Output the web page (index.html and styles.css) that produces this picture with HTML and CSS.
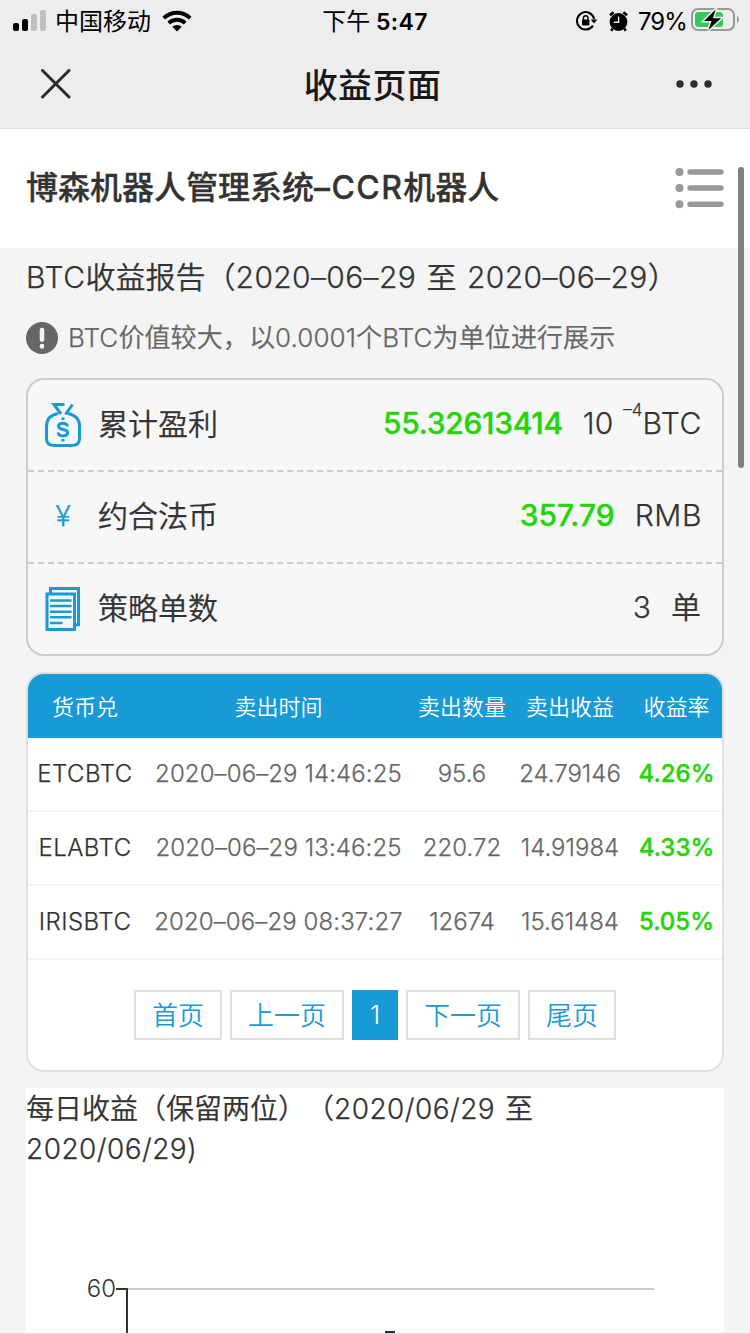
FILE: index.html
```html
<!DOCTYPE html>
<html lang="zh-CN">
<head>
<meta charset="utf-8">
<title>收益页面</title>
<link rel="stylesheet" href="styles.css">
</head>
<body>
<div class="screen">
  <header class="chrome">
    <div class="status">
      <div class="status-left">
        <svg class="signal" width="34" height="22" viewBox="0 0 34 22"><rect x="0" y="13" width="6" height="8" rx="2"/><rect x="9" y="9" width="6" height="12" rx="2"/><rect class="dim" x="18" y="4" width="6" height="17" rx="2"/><rect class="dim" x="27" y="0" width="6" height="21" rx="2"/></svg>
        <span class="carrier">中国移动</span>
        <svg class="wifi" width="30" height="22" viewBox="0 0 30 22"><path class="arc" d="M1.8 8.1a19.2 19.2 0 0 1 26.4 0"/><path class="arc" d="M6.8 13.1a12 12 0 0 1 16.4 0"/><path d="M10.3 16.8a7 7 0 0 1 9.4 0L15 21.6z"/></svg>
      </div>
      <div class="clock">下午 <b>5:47</b></div>
      <div class="status-right">
        <svg width="22" height="20" viewBox="0 0 22 20"><path class="thin" d="M17 14.6A8.7 8.7 0 1 1 18.2 8"/><path d="M14.7 8.4h6.6L18 12.5z"/><rect x="6" y="8.4" width="7.4" height="6" rx=".8"/><path class="hair" d="M7.4 9V7a2.3 2.3 0 0 1 4.6 0v2"/></svg>
        <svg class="alarm" width="19" height="21" viewBox="0 0 19 21"><circle cx="9.500" cy="11" r="8.900"/><path class="thick" d="M1 4.300 4.600 1.200M18 4.300 14.400 1.200M3.600 17.800 2.200 19.800M15.400 17.800l1.400 2"/><path class="hands" d="M9.600 5.500v5.700H4.800"/></svg>
        <span class="percent">79%</span>
        <svg class="battery" width="48" height="24" viewBox="0 0 48 24"><rect class="shell" x="1" y="1" width="42" height="21" rx="6"/><path class="nub" d="M46 8c2.5 1 2.5 6 0 7z"/><rect class="charge" x="4" y="4" width="28" height="15" rx="3.5"/><path class="bolt" d="M24.500 1.500 13 13h7.500L17.500 22 30 10.200H22z"/></svg>
      </div>
    </div>
    <div class="nav">
      <svg class="close" width="30" height="30" viewBox="0 0 30 30"><path d="M1.5 1.5 28 28M28 1.5 1.5 28"/></svg>
      <h1>收益页面</h1>
      <svg class="more" width="36" height="8" viewBox="0 0 36 8"><circle cx="4" cy="4" r="3.7"/><circle cx="18" cy="4" r="3.7"/><circle cx="32" cy="4" r="3.7"/></svg>
    </div>
  </header>

  <section class="brand">
    <h2>博森机器人管理系统<span>–CCR</span>机器人</h2>
    <svg width="49" height="41" viewBox="0 0 49 41"><circle cx="4.500" cy="4" r="4"/><circle cx="4.500" cy="20" r="4"/><circle cx="4.500" cy="36.300" r="4"/><path d="M15 4h31M15 20h31M15 36.300h31"/></svg>
  </section>

  <main>
    <h3 class="report"><span class="latin">BTC</span>收益报告（<span class="range">2020–06–29 至 2020–06–29</span>）</h3>
    <p class="tip">
      <svg width="32" height="32" viewBox="0 0 32 32"><circle cx="16" cy="16" r="16"/><path d="M16 8v9.6M16 24v.4"/></svg>
      <span>BTC价值较大，以0.0001个BTC为单位进行展示</span>
    </p>

    <ul class="summary">
      <li>
        <svg class="icon" width="40" height="46" viewBox="0 0 40 46"><path d="M15 11.5C8 13 3.5 17 3.5 24v12.500q0 7 8 7h17q8 0 8-7V24C36.500 17 32 13 25 11.500"/><path d="M21.500 2.500H11L18 12M29.500 2.500 22.500 12.500"/><path d="M20 15.500v2.500M20 37v2.500"/><path d="M24.500 24.500c0-2-2-3.300-4.500-3.300s-4.500 1-4.500 3c0 4.400 9.200 2.100 9.200 6.400 0 2.100-2 3.300-4.700 3.300s-4.700-1.300-4.800-3.400"/></svg>
        <span class="label">累计盈利</span>
        <span class="value"><b class="profit">55.32613414</b><span class="unit">10</span><sup>–4</sup><span class="latin">BTC</span></span>
      </li>
      <li>
        <span class="icon yen">¥</span>
        <span class="label">约合法币</span>
        <span class="value"><b>357.79</b><span class="unit latin">RMB</span></span>
      </li>
      <li>
        <svg class="icon docs" width="40" height="46" viewBox="0 0 40 46"><path d="M7.500 7V2.500h28v36.200H32M4 8h27.500v35.500H4z"/><path class="lines" d="M8 14.500h19.500M8 20h19.500M8 25.700h19.500M8 31.200h19.500M8 37h10.500"/></svg>
        <span class="label">策略单数</span>
        <span class="value"><span>3</span><span class="unit cjk">单</span></span>
      </li>
    </ul>

    <section class="orders">
      <div class="row head"><span>货币兑</span><span>卖出时间</span><span>卖出数量</span><span>卖出收益</span><span>收益率</span></div>
      <div class="row"><span class="pair">ETCBTC</span><span class="time">2020–06–29 14:46:25</span><span>95.6</span><span>24.79146</span><b>4.26%</b></div>
      <div class="row"><span class="pair">ELABTC</span><span class="time">2020–06–29 13:46:25</span><span>220.72</span><span>14.91984</span><b>4.33%</b></div>
      <div class="row"><span class="pair">IRISBTC</span><span class="time">2020–06–29 08:37:27</span><span>12674</span><span>15.61484</span><b>5.05%</b></div>
      <nav class="pager"><a>首页</a><a class="wide">上一页</a><a class="current">1</a><a class="wide">下一页</a><a>尾页</a></nav>
    </section>

    <section class="daily">
      <h3>每日收益（保留两位）（<span class="days">2020/06/29 至</span><br><span class="days">2020/06/29)</span></h3>
      <svg class="chart" width="698" height="166" viewBox="0 0 698 166"><path class="grid" d="M102 121h526"/><path class="axis" d="M90 121h11M101 120v46"/><rect x="359" y="163" width="10" height="3"/><text x="90" y="129" text-anchor="end">60</text></svg>
    </section>
  </main>
  <div class="scrollbar"></div>
</div>
</body>
</html>
```
FILE: styles.css
```css
* { box-sizing: border-box; margin: 0; padding: 0; }
body {
  width: 750px;
  height: 1334px;
  overflow: hidden;
  background: #f4f4f4;
  color: #333;
  font-family: Inter, "Noto Sans CJK SC DemiLight", "Noto Sans CJK SC", sans-serif;
  font-weight: 300;
  text-spacing-trim: space-all;
}
.screen { position: relative; height: 1334px; overflow: hidden; }
.screen::after {
  content: "";
  position: absolute;
  inset: auto 0 0;
  height: 1px;
  background: #dcdcdc;
}
svg { display: block; flex: none; }

/* Status bar and title bar */
.chrome { height: 129px; background: #ededed; border-bottom: 1px solid #e0e0e0; font-family: Inter, "Noto Sans CJK SC", sans-serif; }
.status {
  display: grid;
  grid-template-columns: 1fr auto 1fr;
  height: 40px;
  align-items: center;
  padding: 0 11px 0 13px;
  color: #000;
  font-size: 24px;
  font-weight: 400;
  line-height: 40px;
}
.status-left, .status-right { display: flex; align-items: center; }
.signal .dim { fill: #bfbfbf; }
.carrier { margin-left: 8px; padding-top: 2px; }
.wifi { margin-left: 11px; }
.wifi .arc { fill: none; stroke: #000; stroke-width: 4; }
.clock { padding-top: 2px; margin-right: 2px; }
.clock b { font-size: 23px; font-weight: 600; letter-spacing: .4px; margin-left: -1px; }
.status-right { justify-content: flex-end; }
.status-right .thin { fill: none; stroke: #000; stroke-width: 2; }
.status-right .hair { fill: none; stroke: #000; stroke-width: 1.4; }
.alarm { margin-left: 11px; }
.alarm .thick { stroke: #000; stroke-width: 2.6; }
.status-right .alarm .hands { fill: none; stroke: #ededed; stroke-width: 1.4; }
.percent { margin-left: 10px; padding-top: 1px; letter-spacing: -.9px; }
.battery { margin: -2px 0 0 4px; }
.battery .shell { fill: none; stroke: #999; stroke-width: 2; }
.battery .nub { fill: #999; }
.battery .charge { fill: #35c759; }
.battery .bolt { stroke: #ededed; stroke-width: 3; paint-order: stroke; }
.nav {
  display: grid;
  grid-template-columns: 1fr auto 1fr;
  align-items: center;
  height: 88px;
  padding: 0 38px 0 41px;
}
.nav h1 { margin: 3px 8px 0 0; color: #191919; font-size: 34px; font-weight: 500; line-height: 50px; letter-spacing: .4px; }
.close { stroke: #2c2c2c; stroke-width: 3; stroke-linecap: round; }
.more { justify-self: end; fill: #2c2c2c; }

/* Brand strip */
.brand {
  display: flex;
  align-items: center;
  justify-content: space-between;
  height: 119px;
  padding: 0 26px;
  background: #fff;
}
.brand h2 { margin-top: -2px; font-family: Inter, "Noto Sans CJK SC", sans-serif; font-size: 32px; font-weight: 500; line-height: 46px; -webkit-text-stroke: .3px #333; }
.brand h2 span { letter-spacing: 1.4px; }
.brand svg { margin-top: -1px; fill: #999; stroke: none; }
.brand path { stroke: #999; stroke-width: 5.4; stroke-linecap: round; }

/* Report */
main { padding: 0 26px; -webkit-text-stroke: .25px currentcolor; }
.latin { letter-spacing: .6px; }
.report { height: 60px; font-size: 30px; font-weight: 300; line-height: 58px; white-space: nowrap; }
.range { letter-spacing: .36px; word-spacing: 1.500px; }
.tip { display: flex; align-items: center; gap: 10px; height: 60px; color: #666; font-size: 26px; line-height: 38px; letter-spacing: .1px; white-space: nowrap; }
.tip span { margin-top: -1px; }
.tip svg { fill: #666; }
.tip path { stroke: #f4f4f4; stroke-width: 4.6; stroke-linecap: round; }

/* Totals */
.summary {
  margin-top: 10px;
  height: 278px;
  border: 2px solid #ccc;
  border-radius: 18px;
  background: #f7f7f7;
  list-style: none;
  font-size: 30px;
}
.summary li { display: flex; align-items: center; height: 92px; padding: 0 20px 0 15px; border-bottom: 2px dashed #ccc; }
.summary li:last-child { height: 90px; border: 0; }
.icon { width: 40px; fill: none; stroke: #189ad6; stroke-width: 3; }
.docs .lines { stroke-width: 2.5; stroke-linecap: round; }
.yen { padding-bottom: 4px; color: #189ad6; text-align: center; font-size: 29px; }
.label { flex: 1; margin-left: 15px; padding-bottom: 7px; }
.value { display: flex; align-items: center; padding-bottom: 4px; white-space: nowrap; }
.value b, .row b { color: #26d40c; font-weight: 500; -webkit-text-stroke: .4px #26d40c; }
.profit { letter-spacing: -.3px; }
.unit { margin-left: 20px; }
.unit.cjk { margin: -4px 1px 0 20px; }
.value sup { align-self: flex-start; margin: -10px 0 0 10px; font-size: 17px; font-weight: 300; line-height: 30px; }

/* Orders table */
.orders {
  height: 400px;
  margin-top: 16px;
  border: 2px solid #dfdfdf;
  border-radius: 18px;
  background: #fff;
  overflow: hidden;
}
.row {
  display: grid;
  grid-template-columns: 114px 273px 94px 122px 91px;
  align-items: center;
  height: 74px;
  padding-bottom: 1px;
  border-bottom: 2px solid #f4f4f4;
  color: #666;
  font-size: 24px;
  text-align: center;
  white-space: nowrap;
}
.row .pair { color: #333; letter-spacing: .5px; }
.row .time { letter-spacing: .1px; }
.head { height: 64px; padding-bottom: 3px; border: 0; background: #189ad6; color: #fff; font-size: 22px; -webkit-text-stroke: 0; }
.pager { display: flex; justify-content: center; gap: 8px; margin-top: 30px; -webkit-text-stroke: 0; }
.pager a {
  width: 88px;
  height: 50px;
  border: 2px solid #dfdfdf;
  color: #189ad6;
  font-size: 26px;
  line-height: 48px;
  text-align: center;
}
.pager .wide { width: 114px; }
.pager .current { width: 46px; border-color: #189ad6; background: #189ad6; color: #fff; line-height: 46px; }

/* Daily chart */
.daily { height: 246px; margin-top: 16px; background: #fff; }
.daily h3 { font-size: 28px; font-weight: 300; line-height: 40px; white-space: nowrap; padding-top: 1px; margin-bottom: -1px; }
.days { letter-spacing: .45px; word-spacing: 1.500px; }
.chart { fill: #333; font-size: 24px; }
.chart .grid { stroke: #ccc; stroke-width: 2; }
.chart .axis { stroke: #333; stroke-width: 2; }
.chart rect { fill: #16245c; }

.scrollbar { position: absolute; top: 167px; left: 738px; width: 6px; height: 301px; border-radius: 3px; background: #7f7f7f; }
```
